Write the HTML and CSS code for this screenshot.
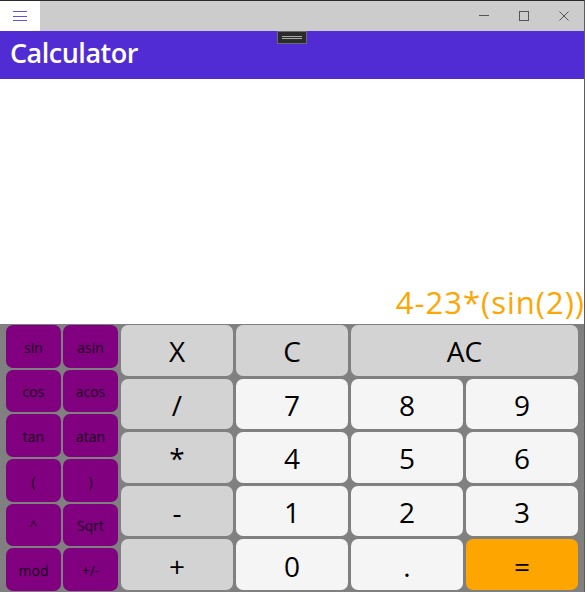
FILE: index.html
```html
<!DOCTYPE html>
<html>
<head>
<meta charset="utf-8">
<link rel="stylesheet" href="styles.css">
</head>
<body>
<div class="window">
  <div class="titlebar">
    <div class="menu-btn">
      <svg width="40" height="30" viewBox="0 0 40 30"><path d="M13 10.5h14M13 15.5h14M13 19.5h14" stroke="#6a4fdc" stroke-width="1"/></svg>
    </div>
    <div class="drag"></div>
    <div class="caption">
      <svg width="40" height="30" viewBox="0 0 40 30"><path d="M15 14.5h10" stroke="#555" stroke-width="1"/></svg>
    </div>
    <div class="caption">
      <svg width="40" height="30" viewBox="0 0 40 30"><rect x="15.5" y="10.5" width="9" height="9" fill="none" stroke="#555" stroke-width="1"/></svg>
    </div>
    <div class="caption">
      <svg width="40" height="30" viewBox="0 0 40 30"><path d="M15.5 10.5l9 9M24.5 10.5l-9 9" stroke="#555" stroke-width="1"/></svg>
    </div>
  </div>
  <div class="header">
    <span class="title">Calculator</span>
    <div class="grip">
      <svg width="30" height="13" viewBox="0 0 30 13"><path d="M5 5.5h20M5 7.5h20" stroke="#aaa" stroke-width="1"/></svg>
    </div>
  </div>
  <div class="display">
    <span class="expr">4-23*(sin(2))</span>
  </div>
  <div class="keypad">
    <div class="funcs">
      <button class="fn">sin</button>
      <button class="fn">asin</button>
      <button class="fn">cos</button>
      <button class="fn">acos</button>
      <button class="fn">tan</button>
      <button class="fn">atan</button>
      <button class="fn">(</button>
      <button class="fn">)</button>
      <button class="fn">^</button>
      <button class="fn">Sqrt</button>
      <button class="fn">mod</button>
      <button class="fn">+/-</button>
    </div>
    <div class="main">
      <button class="key op">X</button>
      <button class="key op">C</button>
      <button class="key op wide">AC</button>
      <button class="key op">/</button>
      <button class="key num">7</button>
      <button class="key num">8</button>
      <button class="key num">9</button>
      <button class="key op">*</button>
      <button class="key num">4</button>
      <button class="key num">5</button>
      <button class="key num">6</button>
      <button class="key op">-</button>
      <button class="key num">1</button>
      <button class="key num">2</button>
      <button class="key num">3</button>
      <button class="key op">+</button>
      <button class="key num">0</button>
      <button class="key num">.</button>
      <button class="key eq">=</button>
    </div>
  </div>
</div>
</body>
</html>
```

FILE: styles.css
```css
* { box-sizing: border-box; }
html, body {
  margin: 0;
  padding: 0;
  width: 585px;
  height: 592px;
  overflow: hidden;
  font-family: "Open Sans", "Noto Sans", sans-serif;
}
.window {
  width: 585px;
  height: 592px;
  display: flex;
  flex-direction: column;
  border-top: 1px solid #2a2a2a;
  border-right: 1px solid #5c5c5c;
  background: #fff;
}
.titlebar {
  height: 30px;
  flex: none;
  display: flex;
  background: #cccccc;
}
.menu-btn {
  width: 40px;
  height: 30px;
  background: #ffffff;
}
.menu-btn svg, .caption svg { display: block; }
.drag { flex: 1; }
.caption {
  width: 40px;
  height: 30px;
}
.header {
  position: relative;
  height: 48px;
  flex: none;
  background: #512bd4;
  padding-left: 10px;
  display: flex;
  align-items: center;
}
.title {
  color: #ffffff;
  font-weight: 600;
  font-size: 27px;
  letter-spacing: -0.5px;
  margin-top: -6px;
}
.grip {
  position: absolute;
  left: 277px;
  top: 0;
  width: 30px;
  height: 13px;
  background: #2b2b2b;
  border: 1px solid #6b6b6b;
}
.grip svg { display: block; position: absolute; left: -1px; top: -1px; }
.display {
  flex: 1;
  background: #ffffff;
  display: flex;
  align-items: flex-end;
  justify-content: flex-end;
  padding-bottom: 2px;
  overflow: hidden;
}
.expr {
  color: #ffa500;
  font-size: 31px;
  line-height: 40px;
  white-space: nowrap;
  letter-spacing: 1px;
  margin-right: -1px;
}
.keypad {
  height: 268px;
  flex: none;
  background: #808080;
  display: flex;
  gap: 3px;
  padding: 1px 6px 1px 6px;
}
.funcs {
  width: 112px;
  display: grid;
  grid-template-columns: 55px 55px;
  grid-template-rows: repeat(6, 1fr);
  column-gap: 2px;
  row-gap: 2px;
}
.main {
  flex: 1;
  display: grid;
  grid-template-columns: repeat(4, 1fr);
  grid-template-rows: repeat(5, 1fr);
  column-gap: 3px;
  row-gap: 3px;
  padding-bottom: 1px;
}
button {
  font-family: inherit;
  border: none;
  margin: 0;
  padding: 0;
  color: #000;
  cursor: default;
}
.fn {
  background: #800080;
  border-radius: 7px;
  font-size: 14px;
  color: #1a001a;
  padding-top: 2px;
}
.key {
  border-radius: 7px;
  font-size: 28px;
  padding-top: 2px;
}
.op { background: #d3d3d3; }
.num { background: #f5f5f5; }
.eq { background: #ffa500; }
.wide { grid-column: span 2; }
```
